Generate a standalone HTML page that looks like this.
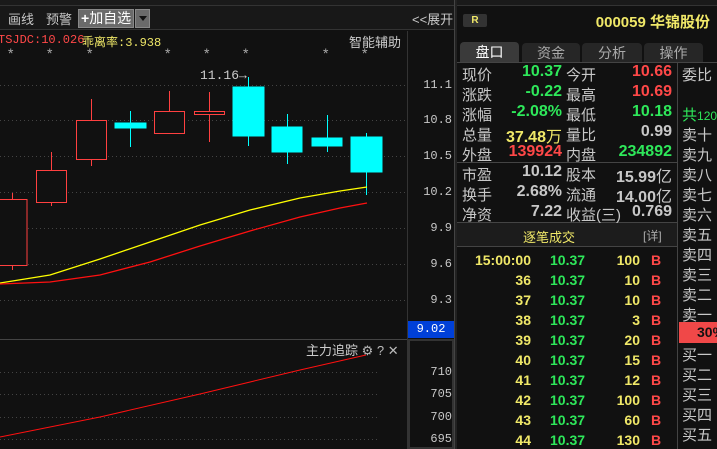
<!DOCTYPE html>
<html><head><meta charset="utf-8"><style>
*{margin:0;padding:0;box-sizing:border-box}
body{width:717px;height:449px;background:#111;overflow:hidden;position:relative;font-family:"Liberation Sans","Noto Sans CJK SC",sans-serif;color:#bbb}
.a{position:absolute;white-space:nowrap}
.mono{font-family:"Liberation Mono","Noto Sans CJK SC",monospace}
.r{text-align:right}
.lbl{font-size:15px;color:#c8c8c8}
.num{font-size:16px;font-weight:bold}
.g{color:#2ee85a}.rd{color:#ff4848}.y{color:#f0e868}.w{color:#c8c8c8}
</style></head><body>
<div class="a" style="left:0;top:0;width:717px;height:6px;background:#1a1a1a;border-bottom:1px solid #333"></div>
<div class="a" style="left:0;top:6px;width:455px;height:24px;background:#181818;border-bottom:1px solid #333"></div>
<div class="a lbl" style="left:8px;top:9px;font-size:13px">画线</div>
<div class="a lbl" style="left:46px;top:9px;font-size:13px">预警</div>
<div class="a" style="left:78px;top:9px;width:56px;height:19px;background:#6a6a6a;border:1px solid #888;color:#fff;font-size:14px;line-height:17px;padding-left:2px"><b>+</b>加自选</div>
<div class="a" style="left:135px;top:9px;width:15px;height:19px;background:#6a6a6a;border:1px solid #888"></div>
<div class="a" style="left:139px;top:16px;border-left:4px solid transparent;border-right:4px solid transparent;border-top:5px solid #111"></div>
<div class="a lbl" style="left:412px;top:9px;font-size:13px">&lt;&lt;展开</div>
<div class="a" style="left:407px;top:31px;width:1px;height:418px;background:#333"></div>
<div class="a" style="left:454px;top:0;width:3px;height:449px;background:#222;border-left:1px solid #444"></div>
<div class="a" style="left:0;top:339px;width:407px;height:1px;background:#444"></div>
<div class="a" style="left:408px;top:339px;width:46px;height:110px;border:2px solid #333"></div>
<div class="a mono rd" style="left:-2px;top:33px;font-size:12px">TSJDC:10.026</div>
<div class="a mono y" style="left:82px;top:33px;font-size:12px">乖离率:3.938</div>
<div class="a" style="left:349px;top:32px;font-size:13px;color:#ccc">智能辅助</div>
<div class="a" style="left:0;top:45px;font-size:14px;color:#aaa;width:400px;height:14px">
<span class="a" style="left:8px">*</span><span class="a" style="left:47px">*</span><span class="a" style="left:87px">*</span><span class="a" style="left:165px">*</span><span class="a" style="left:204px">*</span><span class="a" style="left:243px">*</span><span class="a" style="left:323px">*</span><span class="a" style="left:362px">*</span></div>
<div class="a mono" style="left:200px;top:68px;font-size:13px;color:#ccc">11.16→</div>
<svg class="a" style="left:0;top:0" width="455" height="449">
<g stroke="#444" stroke-dasharray="1,3" stroke-width="1">
<line x1="0" y1="85.5" x2="407" y2="85.5"/><line x1="0" y1="120.5" x2="407" y2="120.5"/><line x1="0" y1="156.5" x2="407" y2="156.5"/><line x1="0" y1="192.5" x2="407" y2="192.5"/><line x1="0" y1="228.5" x2="407" y2="228.5"/><line x1="0" y1="264.5" x2="407" y2="264.5"/><line x1="0" y1="300.5" x2="407" y2="300.5"/>
<line x1="0" y1="372.5" x2="380" y2="372.5"/><line x1="0" y1="394.5" x2="380" y2="394.5"/><line x1="0" y1="417.5" x2="380" y2="417.5"/><line x1="0" y1="439.5" x2="380" y2="439.5"/>
</g>
<g stroke="#ff4040" fill="none" stroke-width="1">
<line x1="12.5" y1="193" x2="12.5" y2="270"/><rect x="-1" y="199.5" width="28" height="66" fill="#111"/>
<line x1="51.5" y1="152" x2="51.5" y2="206"/><rect x="36.5" y="170.5" width="30" height="32" fill="#111"/>
<line x1="91.5" y1="99" x2="91.5" y2="166"/><rect x="76.5" y="120.5" width="30" height="39" fill="#111"/>
<line x1="169.5" y1="91" x2="169.5" y2="133"/><rect x="154.5" y="111.5" width="30" height="22" fill="#111"/>
<line x1="209.5" y1="92" x2="209.5" y2="142"/><rect x="194.5" y="111.5" width="30" height="3" fill="#111"/>
</g>
<g fill="#00ffff" stroke="#00ffff">
<line x1="130.5" y1="111" x2="130.5" y2="147"/><rect x="115" y="123" width="31" height="5"/>
<line x1="248.5" y1="77" x2="248.5" y2="146"/><rect x="233" y="87" width="31" height="49"/>
<line x1="287.5" y1="114" x2="287.5" y2="164"/><rect x="272" y="127" width="30" height="25"/>
<line x1="327.5" y1="115" x2="327.5" y2="152"/><rect x="312" y="138" width="30" height="8"/>
<line x1="366.5" y1="133" x2="366.5" y2="195"/><rect x="351" y="137" width="31" height="35"/>
</g>
<polyline fill="none" stroke="#ffff00" stroke-width="1.3" points="0,283 50,275 100,259 150,242 200,225 250,210 300,198 340,191 367,187"/>
<polyline fill="none" stroke="#ff1010" stroke-width="1.3" points="0,284 50,282 100,275 150,262 200,246 250,231 300,217 340,208 367,203"/>
<polyline fill="none" stroke="#ff1010" stroke-width="1" points="0,437 100,417 200,394 300,370 366,355"/>
</svg>
<div class="a mono w r" style="left:408px;top:78px;width:44px;font-size:12px">11.1</div>
<div class="a mono w r" style="left:408px;top:113px;width:44px;font-size:12px">10.8</div>
<div class="a mono w r" style="left:408px;top:149px;width:44px;font-size:12px">10.5</div>
<div class="a mono w r" style="left:408px;top:185px;width:44px;font-size:12px">10.2</div>
<div class="a mono w r" style="left:408px;top:221px;width:44px;font-size:12px">9.9</div>
<div class="a mono w r" style="left:408px;top:257px;width:44px;font-size:12px">9.6</div>
<div class="a mono w r" style="left:408px;top:293px;width:44px;font-size:12px">9.3</div>
<div class="a mono" style="left:408px;top:321px;width:46px;height:17px;background:#0040d8;color:#fff;font-size:12px;text-align:center;line-height:17px">9.02</div>
<div class="a mono w r" style="left:408px;top:365px;width:44px;font-size:12px">710</div>
<div class="a mono w r" style="left:408px;top:387px;width:44px;font-size:12px">705</div>
<div class="a mono w r" style="left:408px;top:410px;width:44px;font-size:12px">700</div>
<div class="a mono w r" style="left:408px;top:432px;width:44px;font-size:12px">695</div>
<div class="a" style="left:306px;top:340px;font-size:13px;color:#ccc">主力追踪 <span style="color:#bbb">⚙ ? ✕</span></div>
<div class="a" style="left:463px;top:14px;width:24px;height:13px;background:#333;border-radius:2px;color:#f0e868;font-size:10px;font-weight:bold;text-align:center;line-height:13px">R</div>
<div class="a y" style="right:7px;top:11px;font-size:15px;font-weight:bold">000059 华锦股份</div>
<div class="a" style="left:460px;top:42px;width:59px;height:21px;background:#3a3a3a;border-radius:4px 4px 0 0;color:#fff;font-size:14px;text-align:center;line-height:21px">盘口</div>
<div class="a" style="left:522px;top:43px;width:58px;height:20px;background:#262626;border-radius:4px 4px 0 0;color:#aaa;font-size:14px;text-align:center;line-height:20px">资金</div>
<div class="a" style="left:582px;top:43px;width:60px;height:20px;background:#262626;border-radius:4px 4px 0 0;color:#aaa;font-size:14px;text-align:center;line-height:20px">分析</div>
<div class="a" style="left:644px;top:43px;width:59px;height:20px;background:#262626;border-radius:4px 4px 0 0;color:#aaa;font-size:14px;text-align:center;line-height:20px">操作</div>
<div class="a" style="left:457px;top:62px;width:260px;height:1px;background:#444"></div>
<div class="a" style="left:677px;top:63px;width:1px;height:386px;background:#444"></div>
<div class="a" style="left:457px;top:162px;width:220px;height:1px;background:#444"></div>
<div class="a" style="left:457px;top:222px;width:220px;height:25px;background:#1c1c1c;border-top:1px solid #444;border-bottom:1px solid #444"></div>
<div class="a y" style="left:523px;top:227px;font-size:13px">逐笔成交</div>
<div class="a" style="left:643px;top:227px;font-size:12px;color:#aaa">[详]</div>
<div style="position:absolute;left:0;top:0">
<div class="a lbl" style="left:462px;top:64px">现价</div><div class="a num g r" style="left:500px;top:63px;width:62px">10.37</div><div class="a lbl" style="left:566px;top:64px">今开</div><div class="a num rd r" style="left:600px;top:63px;width:72px">10.66</div>
<div class="a lbl" style="left:462px;top:84px">涨跌</div><div class="a num g r" style="left:500px;top:83px;width:62px">-0.22</div><div class="a lbl" style="left:566px;top:84px">最高</div><div class="a num rd r" style="left:600px;top:83px;width:72px">10.69</div>
<div class="a lbl" style="left:462px;top:104px">涨幅</div><div class="a num g r" style="left:490px;top:103px;width:72px">-2.08%</div><div class="a lbl" style="left:566px;top:104px">最低</div><div class="a num g r" style="left:600px;top:103px;width:72px">10.18</div>
<div class="a lbl" style="left:462px;top:124px">总量</div><div class="a num y r" style="left:480px;top:123px;width:82px">37.48<span style="font-weight:normal">万</span></div><div class="a lbl" style="left:566px;top:124px">量比</div><div class="a num w r" style="left:600px;top:123px;width:72px">0.99</div>
<div class="a lbl" style="left:462px;top:144px">外盘</div><div class="a num rd r" style="left:490px;top:143px;width:72px">139924</div><div class="a lbl" style="left:566px;top:144px">内盘</div><div class="a num g r" style="left:600px;top:143px;width:72px">234892</div>
<div class="a lbl" style="left:462px;top:164px">市盈</div><div class="a num w r" style="left:490px;top:163px;width:72px">10.12</div><div class="a lbl" style="left:566px;top:164px">股本</div><div class="a num w r" style="left:590px;top:163px;width:82px">15.99<span style="font-weight:normal">亿</span></div>
<div class="a lbl" style="left:462px;top:184px">换手</div><div class="a num w r" style="left:490px;top:183px;width:72px">2.68%</div><div class="a lbl" style="left:566px;top:184px">流通</div><div class="a num w r" style="left:590px;top:183px;width:82px">14.00<span style="font-weight:normal">亿</span></div>
<div class="a lbl" style="left:462px;top:204px">净资</div><div class="a num w r" style="left:490px;top:203px;width:72px">7.22</div><div class="a lbl" style="left:566px;top:204px">收益(三)</div><div class="a num w r" style="left:600px;top:203px;width:72px">0.769</div>
</div>
<div style="position:absolute;left:0;top:0;font-size:15px;color:#c8c8c8">
<div class="a" style="left:682px;top:64px">委比</div>
<div class="a g" style="left:682px;top:104px">共<span style="font-size:12px">120</span></div>
<div class="a" style="left:682px;top:124px">卖十</div><div class="a" style="left:682px;top:144px">卖九</div><div class="a" style="left:682px;top:164px">卖八</div><div class="a" style="left:682px;top:184px">卖七</div><div class="a" style="left:682px;top:204px">卖六</div><div class="a" style="left:682px;top:224px">卖五</div><div class="a" style="left:682px;top:244px">卖四</div><div class="a" style="left:682px;top:264px">卖三</div><div class="a" style="left:682px;top:284px">卖二</div><div class="a" style="left:682px;top:304px">卖一</div>
<div class="a" style="left:679px;top:322px;width:38px;height:21px;background:#f04848;color:#111;font-weight:bold;font-size:14px;line-height:21px;padding-left:18px">30%</div>
<div class="a" style="left:682px;top:344px">买一</div><div class="a" style="left:682px;top:364px">买二</div><div class="a" style="left:682px;top:384px">买三</div><div class="a" style="left:682px;top:404px">买四</div><div class="a" style="left:682px;top:424px">买五</div>
</div>
<div style="position:absolute;left:0;top:0;font-size:14px;font-weight:bold">
<div class="a y r" style="left:460px;top:252px;width:71px">15:00:00</div><div class="a g" style="left:550px;top:252px">10.37</div><div class="a y r" style="left:600px;top:252px;width:40px">100</div><div class="a rd" style="left:651px;top:252px">B</div>
<div class="a y r" style="left:460px;top:272px;width:71px">36</div><div class="a g" style="left:550px;top:272px">10.37</div><div class="a y r" style="left:600px;top:272px;width:40px">10</div><div class="a rd" style="left:651px;top:272px">B</div>
<div class="a y r" style="left:460px;top:292px;width:71px">37</div><div class="a g" style="left:550px;top:292px">10.37</div><div class="a y r" style="left:600px;top:292px;width:40px">10</div><div class="a rd" style="left:651px;top:292px">B</div>
<div class="a y r" style="left:460px;top:312px;width:71px">38</div><div class="a g" style="left:550px;top:312px">10.37</div><div class="a y r" style="left:600px;top:312px;width:40px">3</div><div class="a rd" style="left:651px;top:312px">B</div>
<div class="a y r" style="left:460px;top:332px;width:71px">39</div><div class="a g" style="left:550px;top:332px">10.37</div><div class="a y r" style="left:600px;top:332px;width:40px">20</div><div class="a rd" style="left:651px;top:332px">B</div>
<div class="a y r" style="left:460px;top:352px;width:71px">40</div><div class="a g" style="left:550px;top:352px">10.37</div><div class="a y r" style="left:600px;top:352px;width:40px">15</div><div class="a rd" style="left:651px;top:352px">B</div>
<div class="a y r" style="left:460px;top:372px;width:71px">41</div><div class="a g" style="left:550px;top:372px">10.37</div><div class="a y r" style="left:600px;top:372px;width:40px">12</div><div class="a rd" style="left:651px;top:372px">B</div>
<div class="a y r" style="left:460px;top:392px;width:71px">42</div><div class="a g" style="left:550px;top:392px">10.37</div><div class="a y r" style="left:600px;top:392px;width:40px">100</div><div class="a rd" style="left:651px;top:392px">B</div>
<div class="a y r" style="left:460px;top:412px;width:71px">43</div><div class="a g" style="left:550px;top:412px">10.37</div><div class="a y r" style="left:600px;top:412px;width:40px">60</div><div class="a rd" style="left:651px;top:412px">B</div>
<div class="a y r" style="left:460px;top:432px;width:71px">44</div><div class="a g" style="left:550px;top:432px">10.37</div><div class="a y r" style="left:600px;top:432px;width:40px">130</div><div class="a rd" style="left:651px;top:432px">B</div>
</div>
</body></html>
